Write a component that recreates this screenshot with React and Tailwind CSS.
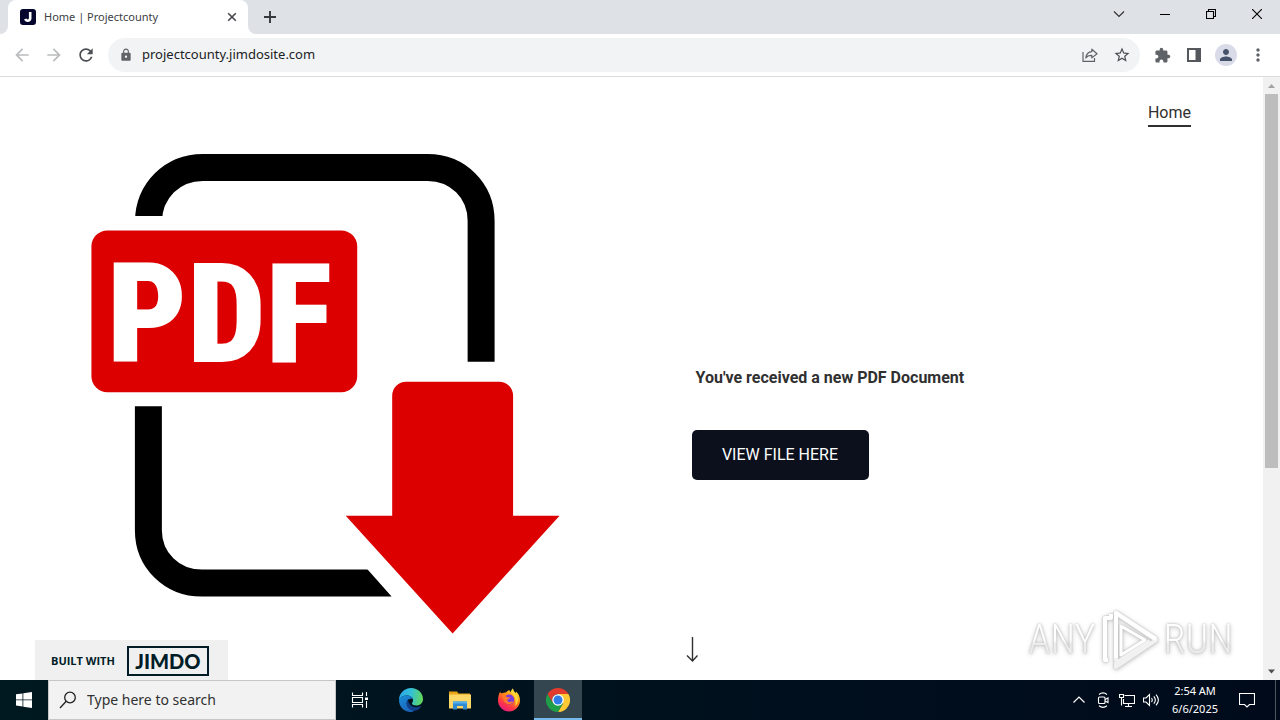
import React from "react";
import {
  MdArrowBack,
  MdArrowForward,
  MdExtension,
  MdLock,
  MdMoreVert,
  MdPerson,
  MdRefresh,
  MdStarBorder,
} from "react-icons/md";
import clsx from "clsx";

const IconButton = ({ label, className, children }) => (
  <button
    type="button"
    aria-label={label}
    className={clsx("flex shrink-0 items-center justify-center", className)}
  >
    {children}
  </button>
);

const TabStrip = () => (
  <div className="flex h-[34px] items-stretch bg-[#dee1e6]">
    <div className="flex w-2 items-end">
      <svg viewBox="0 0 8 8" className="h-2 w-2">
        <path d="M8 0v8H0a8 8 0 0 0 8-8z" fill="#fff" />
      </svg>
    </div>
    <div className="flex w-60 items-center rounded-t-lg bg-white pl-3 pr-2">
      <span className="flex h-4 w-4 items-center justify-center rounded-[3px] bg-[#05052d]">
        <svg viewBox="0 0 16 16" className="h-4 w-4" fill="none" stroke="#fff" strokeWidth="2.6">
          <path d="M10.2 3v6.2a2.6 2.6 0 0 1-5 .9" />
        </svg>
      </span>
      <span className="ml-2 flex-1 truncate text-[11px] text-[#3c4043]">Home | Projectcounty</span>
      <IconButton label="Close tab" className="h-4 w-4">
        <svg viewBox="0 0 16 16" className="h-4 w-4" stroke="#45494d" strokeWidth="1.6">
          <path d="M4.2 4.2l7.6 7.6M11.8 4.2l-7.6 7.6" />
        </svg>
      </IconButton>
    </div>
    <div className="flex w-2 items-end">
      <svg viewBox="0 0 8 8" className="h-2 w-2">
        <path d="M0 0v8h8a8 8 0 0 1-8-8z" fill="#fff" />
      </svg>
    </div>
    <IconButton label="New tab" className="w-7">
      <svg viewBox="0 0 16 16" className="h-4 w-4" stroke="#35383c" strokeWidth="1.9">
        <path d="M8 2v12M2 8h12" />
      </svg>
    </IconButton>
    <div className="ml-auto flex pb-1.5">
      <IconButton label="Search tabs" className="w-[46px]">
        <svg viewBox="0 0 12 12" className="h-3 w-3" fill="none" stroke="#333" strokeWidth="1.2">
          <path d="M1 3.5l5 5 5-5" />
        </svg>
      </IconButton>
      <IconButton label="Minimize" className="w-[46px]">
        <svg viewBox="0 0 10 10" className="h-2.5 w-2.5" stroke="#000">
          <path d="M0 5.5h10" />
        </svg>
      </IconButton>
      <IconButton label="Restore" className="w-[46px]">
        <svg viewBox="0 0 10 10" className="h-2.5 w-2.5" fill="none" stroke="#000" strokeWidth="1.1">
          <path d="M.5 2.5h7v7h-7zM2.5 2.5v-2h7v7h-2" />
        </svg>
      </IconButton>
      <IconButton label="Close" className="w-[46px]">
        <svg viewBox="0 0 10 10" className="h-2.5 w-2.5" stroke="#000" strokeWidth="1.1">
          <path d="M0 0l10 10M10 0L0 10" />
        </svg>
      </IconButton>
    </div>
  </div>
);

const Toolbar = () => (
  <div className="flex h-[43px] items-center border-b border-[#dadce0] bg-white px-2 text-[#5f6368]">
    <div className="flex gap-1">
      <IconButton label="Back" className="h-7 w-7 text-[#babcbe]">
        <MdArrowBack size={20} />
      </IconButton>
      <IconButton label="Forward" className="h-7 w-7 text-[#babcbe]">
        <MdArrowForward size={20} />
      </IconButton>
      <IconButton label="Reload" className="h-7 w-7 text-[#4a4e52]">
        <MdRefresh size={20} />
      </IconButton>
    </div>
    <div className="mx-2 flex h-[34px] flex-1 items-center rounded-full bg-[#f1f3f4] pl-2 pr-1">
      <span className="flex w-5 justify-center">
        <MdLock size={14} />
      </span>
      <input
        type="text"
        aria-label="Address"
        defaultValue="projectcounty.jimdosite.com"
        className="ml-1.5 min-w-0 flex-1 bg-transparent text-[13px] text-[#202124] outline-none"
      />
      <div className="flex gap-1">
        <IconButton label="Share" className="h-7 w-7">
          <svg viewBox="0 0 16 16" className="h-4 w-4" fill="none" stroke="#5f6368" strokeWidth="1.2">
            <path d="M1 5v9.3h11.5V11" />
            <path d="M9.8 2.2L15 6.7l-5.2 4.2V8.4C7 8.3 5.2 9 3.8 11 4.2 7.4 6.2 5 9.8 4.7z" strokeLinejoin="round" />
          </svg>
        </IconButton>
        <IconButton label="Bookmark" className="h-7 w-7 text-[#4a4e52]">
          <MdStarBorder size={18} />
        </IconButton>
      </div>
    </div>
    <div className="flex items-center gap-1">
      <IconButton label="Extensions" className="h-7 w-7">
        <MdExtension size={17} />
      </IconButton>
      <IconButton label="Side panel" className="h-7 w-7">
        <svg viewBox="0 0 14 14" className="h-3.5 w-3.5">
          <path d="M0 0h14v14H0zM2 2v10h6.5V2z" fill="#54585c" fillRule="evenodd" />
        </svg>
      </IconButton>
      <IconButton label="Profile" className="h-7 w-7">
        <span className="flex h-[22px] w-[22px] items-center justify-center rounded-full bg-[#d9dce8] text-[#46516b]">
          <MdPerson size={18} />
        </span>
      </IconButton>
      <IconButton label="Menu" className="h-7 w-7">
        <MdMoreVert size={20} />
      </IconButton>
    </div>
  </div>
);

const PdfPicture = () => (
  <svg viewBox="0 0 632 603" preserveAspectRatio="xMinYMin meet" className="w-full" role="img" aria-label="PDF download">
    <g fill="none" stroke="#000" strokeWidth="27">
      <path d="M148.500 145C149 113 173 90.500 203 90.500h225c30 0 53.500 23 53.500 53.500v141" />
      <path d="M148.500 329.500v124c0 30 23.500 53 53.500 53h190" />
    </g>
    <path d="M130 139h40v14h-40zM367 491.900V490h26v31.100z" fill="#fff" />
    <rect x="91.500" y="153.500" width="266" height="162" rx="16" fill="#dc0000" />
    <text
      x="107"
      y="285"
      fontSize="140"
      fontWeight="900"
      fill="#fff"
      className="font-['Roboto_Condensed','Roboto',sans-serif]"
    >
      PDF
    </text>
    <path d="M392.500 319a14 14 0 0 1 14-14h93a14 14 0 0 1 14 14v120h46.500L453 557 346 439h46.500z" fill="#dc0000" />
  </svg>
);

const BuiltWithBadge = () => (
  <a
    href="#jimdo"
    className="absolute bottom-0 left-[35px] flex h-10 w-[193px] items-center gap-3 bg-[#f0f0f0] pl-4 pt-0.5 text-[#001d27]"
  >
    <span className="font-['Open_Sans'] text-[11px] font-bold">BUILT WITH</span>
    <span className="flex h-[30px] w-[82px] items-center justify-center border-2 border-[#001d27] font-[Lato] text-xl font-black">
      JIMDO
    </span>
  </a>
);

const Watermark = () => (
  <div className="pointer-events-none absolute bottom-2 right-[30px] flex items-center gap-1 font-['Roboto_Condensed','Roboto',sans-serif] text-[40px] font-light leading-none text-white [filter:drop-shadow(0_0_1px_#bbb)_drop-shadow(0_1px_2px_#ccc)]">
    <span className="bg-linear-to-b from-white from-50% to-[#ececec] to-60% bg-clip-text text-transparent">ANY</span>
    <svg viewBox="0 0 60 64" className="h-16 w-[60px]" fill="none" stroke="#fff" strokeWidth="4" strokeLinejoin="round">
      <path d="M8 52H5V10h6V6" />
      <path d="M16 53V5l40 27-40 27v-4l34-22" stroke="#f1f1f1" />
      <path d="M16 50V5l40 26" />
      <path d="M21 18v29l24-15z" strokeWidth="3" />
    </svg>
    <span className="bg-linear-to-b from-white from-50% to-[#ececec] to-60% bg-clip-text text-transparent">RUN</span>
  </div>
);

const Scrollbar = () => (
  <div className="flex w-[17px] shrink-0 flex-col items-center bg-[#f1f1f1]">
    <svg viewBox="0 0 17 17" className="h-[17px] w-[17px]" fill="#a3a3a3">
      <path d="M5 11l3.500-4 3.500 4z" />
    </svg>
    <div className="h-[374px] w-[13px] bg-[#bdbdbd]" />
    <svg viewBox="0 0 17 17" className="mt-auto h-[17px] w-[17px]" fill="#505050">
      <path d="M5 6.500l3.500 4 3.500-4z" />
    </svg>
  </div>
);

const Page = () => (
  <div className="flex flex-1 bg-white">
    <main className="relative grid min-w-0 flex-1 grid-cols-2 font-[Roboto] text-base text-[#303030]">
      <PdfPicture />
      <div className="flex flex-col pl-[60px] pr-[72px]">
        <nav className="flex justify-end pt-6">
          <a href="#home" className="border-b-2 border-[#303030]">
            Home
          </a>
        </nav>
        <h1 className="mt-[239px] pl-1 font-bold">You&apos;ve received a new PDF Document</h1>
        <a
          href="#file"
          className="mt-10 flex h-[50px] w-[177px] items-center justify-center self-start rounded-[5px] bg-[#0b101c] text-white"
        >
          VIEW FILE HERE
        </a>
        <button type="button" aria-label="Scroll down" className="-ml-1.5 mb-[18px] mt-auto flex w-3 self-start">
          <svg viewBox="0 0 12 25" className="h-[25px] w-3" fill="none" stroke="#303030" strokeWidth="1.4">
            <path d="M6.500 0v24M1 18.500l5.500 5.500 5-5.500" />
          </svg>
        </button>
      </div>
      <BuiltWithBadge />
      <Watermark />
    </main>
    <Scrollbar />
  </div>
);

const EdgeLogo = () => (
  <svg viewBox="0 0 24 24" className="h-6 w-6">
    <defs>
      <linearGradient id="edgeTop" x1="0" y1="0.4" x2="1" y2="0.5">
        <stop offset="0" stopColor="#2aa7e8" />
        <stop offset="0.5" stopColor="#35c1d5" />
        <stop offset="1" stopColor="#62d957" />
      </linearGradient>
      <linearGradient id="edgeLow" x1="0" y1="0" x2="0.6" y2="1">
        <stop offset="0" stopColor="#1a8fd8" />
        <stop offset="1" stopColor="#1b62b8" />
      </linearGradient>
    </defs>
    <path d="M12 0c7 0 12 5 12 11 0 4-3 6.500-6.500 6.500-3 0-4.500-1-4.500-2 0-.8 1-1.200 1-3C14 10 12 7.500 8 7.500 4 7.500 1 9.500 0 12 0 5 5.500 0 12 0z" fill="url(#edgeTop)" />
    <path d="M0 12c1-3 4-4.500 8-4.500 3 0 5 1 5.700 3C9.500 10 7 13 8 16.500c.8 3.500 4 6 8 6-1.200.9-2.700 1.500-4.500 1.500C5 24 0 18.800 0 12z" fill="url(#edgeLow)" />
    <path d="M8.800 11.500C6.300 14.500 7.500 20 12 22c3.500 1.500 7.500.3 10-3.300.3-.5 0-.7-.5-.5-5.500 2.600-11.700.3-12.700-6.700z" fill="#123f8a" />
  </svg>
);

const ExplorerLogo = () => (
  <svg viewBox="0 0 24 24" className="h-6 w-6">
    <path d="M1 3.500h8l1.500 2H22V8H1z" fill="#e8a317" />
    <path d="M1 6.500h22v14H1z" fill="#ffd766" />
    <path d="M5 21.500v-8h14v8h-4v-3.500H9v3.500z" fill="#2f8bd2" />
    <path d="M5 13.500h14v2H5z" fill="#56b0ee" />
  </svg>
);

const FirefoxLogo = () => (
  <svg viewBox="0 0 24 24" className="h-6 w-6">
    <defs>
      <linearGradient id="foxBody" x1="0.8" y1="0" x2="0.2" y2="1">
        <stop offset="0" stopColor="#fff14f" />
        <stop offset="0.35" stopColor="#ff980e" />
        <stop offset="0.7" stopColor="#ff3647" />
        <stop offset="1" stopColor="#e31587" />
      </linearGradient>
    </defs>
    <path d="M3.200 3.500C3.500 5 4 5.500 5 5.300 6.500 4.500 8 4.300 9 4.500 10 3 12 2 12.500 2c0 1 .3 1.800 1 2.300C14 2.500 15 1 16 .5c0 2 1 3 2.500 4.500.5-.5.500-1 .5-1.500 2.500 2 4 5 4 9 0 6-5 11-11 11s-11-5-11-11c0-3.500.7-6.500 2.200-9z" fill="url(#foxBody)" />
    <circle cx="12.200" cy="11.500" r="5" fill="#7a3be0" />
    <path d="M5.500 8c2-.7 3.700 0 4.700 1.200h3c-.3 1.300-1.700 1.600-2.700 2.300-.4 1.500.5 2.500 2 2.500s2-1 3.500-.4c-1 2.200-3.500 3.200-5.500 2.400C7.500 15 6 12 5.500 8z" fill="#ff7a2a" />
    <path d="M14 4.500c1-1.500 1.300-2.500 2-4 0 2 1.500 3.500 3 5.500 3 4 2.500 9-1 12.500 1.500-5 .500-10-4-14z" fill="#ffd53a" />
  </svg>
);

const ChromeLogo = () => (
  <svg viewBox="0 0 24 24" className="h-6 w-6">
    <path d="M12 12V6h10.400A12 12 0 0 1 12 24l5.200-9z" fill="#fcc934" />
    <path d="M12 12l5.200 3L12 24A12 12 0 0 1 1.600 6l5.200 9z" fill="#1e9e49" />
    <path d="M1.600 6a12 12 0 0 1 20.800 0H12a6 6 0 0 0-5.200 9z" fill="#e33b2e" />
    <circle cx="12" cy="12" r="5.800" fill="#fff" />
    <circle cx="12" cy="12" r="4.500" fill="#2f7de9" />
  </svg>
);

const apps = [
  { name: "Microsoft Edge", Logo: EdgeLogo },
  { name: "File Explorer", Logo: ExplorerLogo },
  { name: "Firefox", Logo: FirefoxLogo },
  { name: "Google Chrome", Logo: ChromeLogo, active: true },
];

const Tray = () => (
  <div className="ml-auto flex items-stretch text-white">
    <IconButton label="Show hidden icons" className="w-6">
      <svg viewBox="0 0 16 16" className="h-4 w-4" fill="none" stroke="#fff" strokeWidth="1.2">
        <path d="M2.500 10.500L8 5l5.500 5.500" />
      </svg>
    </IconButton>
    <IconButton label="Meet now" className="w-6">
      <svg viewBox="0 0 16 16" className="h-4 w-4" fill="none" stroke="#fff" strokeWidth="1.1">
        <rect x="3.500" y="5" width="6.500" height="6.500" rx="1" />
        <path d="M10 7.500l3-1.500v4.500L10 9M4 2.500c2.500-2 5.500-2 8 0M4 13.800c2.500 2 5.500 2 8 0" />
      </svg>
    </IconButton>
    <IconButton label="Network" className="w-6">
      <svg viewBox="0 0 16 16" className="h-4 w-4" fill="none" stroke="#fff" strokeWidth="1.100">
        <path d="M5.500 3.500h10v8h-11V7M9.500 11.500v3M6 14.500h7" />
        <path d="M.5 2.500h4v3h-4zM2.500 5.500v8" />
      </svg>
    </IconButton>
    <IconButton label="Volume" className="w-6">
      <svg viewBox="0 0 16 16" className="h-4 w-4" fill="none" stroke="#fff" strokeWidth="1.1">
        <path d="M.5 6h2.500l3.500-3.500v11L3 10H.5z" />
        <path d="M8.500 6c1 1.300 1 2.700 0 4M10.800 4.300c2 2.400 2 5 0 7.400M13 2.700c3 3.300 3 7.300 0 10.600" />
      </svg>
    </IconButton>
    <div className="flex w-16 flex-col items-center justify-center text-[11px] leading-[18px]">
      <time>2:54 AM</time>
      <time>6/6/2025</time>
    </div>
    <IconButton label="Notifications" className="w-10">
      <svg viewBox="0 0 16 16" className="h-4 w-4" fill="none" stroke="#fff" strokeWidth="1.1">
        <path d="M.5 1.500h15v11h-5L8 15l-2.500-2.500h-5z" />
      </svg>
    </IconButton>
    <button type="button" aria-label="Show desktop" className="ml-2 w-[5px] border-l border-[#4d5560]" />
  </div>
);

const Taskbar = () => (
  <div className="flex h-10 bg-linear-to-r from-[#001820] to-[#000a1b]">
    <IconButton label="Start" className="w-12">
      <svg viewBox="0 0 16 16" className="h-4 w-4" fill="#fff">
        <path d="M0 2.300l6.500-.9v6.100H0zM7.300 1.300L16 0v7.500H7.300zM0 8.300h6.500v6.200L0 13.600zM7.300 8.300H16V16l-8.700-1.300z" />
      </svg>
    </IconButton>
    <label className="flex w-72 items-center border border-[#c6c6c6] bg-[#f2f2f2] pl-2.5">
      <svg viewBox="0 0 18 18" className="h-[18px] w-[18px]" fill="none" stroke="#222" strokeWidth="1.3">
        <circle cx="11" cy="6.500" r="5.300" />
        <path d="M7.200 10.300L1 17" />
      </svg>
      <input
        type="text"
        aria-label="Search"
        placeholder="Type here to search"
        className="ml-2.5 min-w-0 flex-1 bg-transparent text-sm outline-none placeholder:text-[#303030]"
      />
    </label>
    <IconButton label="Task view" className="w-12">
      <svg viewBox="0 0 18 18" className="h-[18px] w-[18px]" fill="none" stroke="#fff" strokeWidth="1.1">
        <path d="M1.500 1.500v3h10v-3M1.500 16.500v-3h10v3M1.500 6.500h10v5h-10zM15.500 1v4M15.500 10v7" />
        <path d="M14 6.500h3v2.500h-3z" fill="#fff" stroke="none" />
      </svg>
    </IconButton>
    <div className="ml-[3px] flex gap-px">
      {apps.map(({ name, Logo, active }) => (
        <IconButton
          key={name}
          label={name}
          className={clsx("w-12 border-y-2", active ? "border-t-[#34464f] border-b-[#76b9ed] bg-[#34464f]" : "border-transparent")}
        >
          <Logo />
        </IconButton>
      ))}
    </div>
    <Tray />
  </div>
);

const App = () => (
  <div className="flex min-h-screen flex-col overflow-hidden font-['Noto_Sans',sans-serif]">
    <TabStrip />
    <Toolbar />
    <Page />
    <Taskbar />
  </div>
);

export default App;
